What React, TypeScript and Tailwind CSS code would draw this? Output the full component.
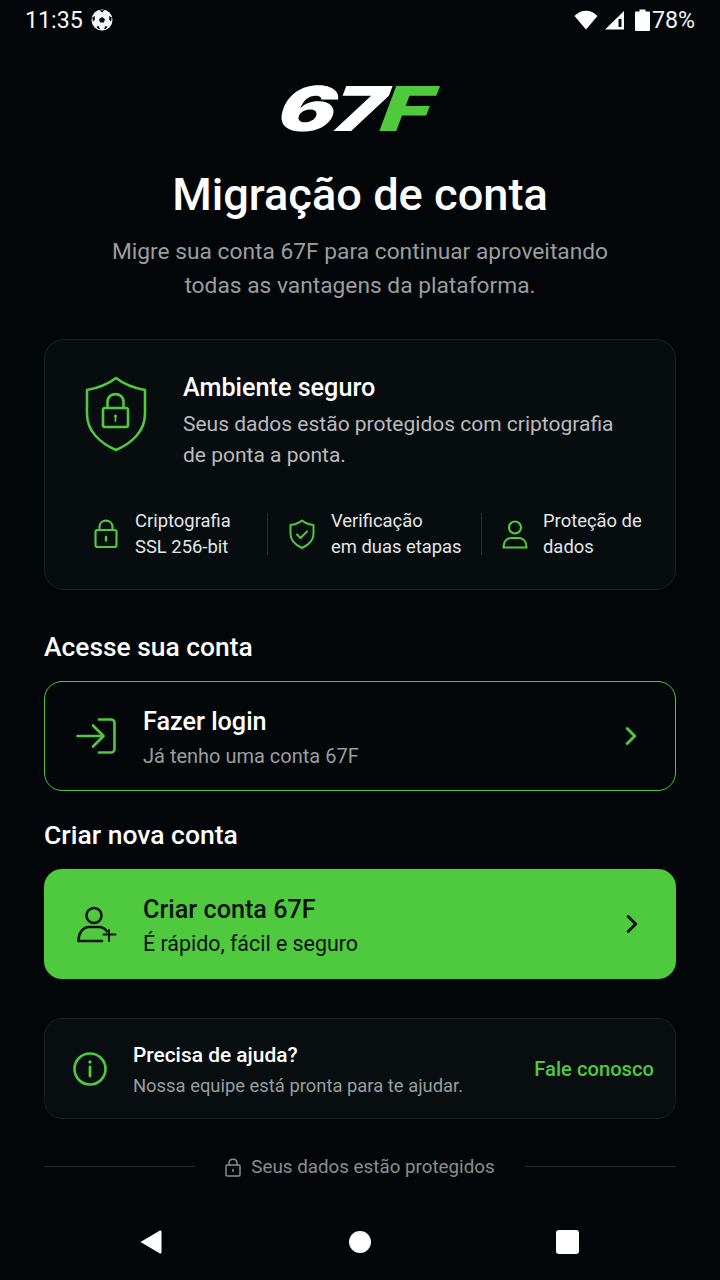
import { ChevronRight } from 'lucide-react';

const GREEN = '#4fc93d';

function BigShield() {
  return (
    <svg width="62" height="76" viewBox="0 0 62 76" fill="none" stroke={GREEN} strokeWidth="2.6" strokeLinejoin="round" strokeLinecap="round">
      <path d="M31 2 C40 9 49 12 60 14 V38 C60 55 47 67 31 74 C15 67 2 55 2 38 V14 C13 12 22 9 31 2 Z" />
      <rect x="18" y="32" width="25" height="19" rx="2" />
      <path d="M22.5 32 V26 C22.5 15.5 38.5 15.5 38.5 26 V32" />
      <circle cx="30.5" cy="40" r="1.5" fill={GREEN} stroke="none" />
      <path d="M30.5 40 V45" strokeWidth="1.8" />
    </svg>
  );
}

function SmallLock() {
  return (
    <svg width="24" height="30" viewBox="0 0 24 30" fill="none" stroke={GREEN} strokeWidth="2.2" strokeLinejoin="round" strokeLinecap="round">
      <rect x="1.5" y="11" width="21" height="17" rx="2" />
      <path d="M5.5 11 V8 C5.5 -0.5 18.5 -0.5 18.5 8 V11" />
      <path d="M12 18 V21.5" strokeWidth="2.4" />
    </svg>
  );
}

function SmallShield() {
  return (
    <svg width="26" height="30" viewBox="0 0 26 30" fill="none" stroke={GREEN} strokeWidth="2" strokeLinejoin="round" strokeLinecap="round">
      <path d="M13 1.5 C16 4 20 5.5 24.5 6 V15 C24.5 21.5 19.5 26 13 29 C6.5 26 1.5 21.5 1.5 15 V6 C6 5.5 10 4 13 1.5 Z" />
      <path d="M8 15.5 L11.5 19 L18 12.5" />
    </svg>
  );
}

function SmallPerson() {
  return (
    <svg width="26" height="29" viewBox="0 0 26 29" fill="none" stroke={GREEN} strokeWidth="2.2" strokeLinejoin="round" strokeLinecap="round">
      <circle cx="13" cy="7.5" r="6" />
      <path d="M1.5 27.5 C1.5 22 4.5 18 9.5 18 H16.5 C21.5 18 24.5 22 24.5 27.5 Z" />
    </svg>
  );
}

function LoginIcon() {
  return (
    <svg width="40" height="36" viewBox="0 0 40 36" fill="none" stroke={GREEN} strokeWidth="2.6" strokeLinejoin="round" strokeLinecap="round">
      <path d="M23 1.5 H35 C37 1.5 38.5 3 38.5 5 V31 C38.5 33 37 34.5 35 34.5 H23" />
      <path d="M1.5 18 H27" />
      <path d="M17 7.5 L27.5 18 L17 28.5" />
    </svg>
  );
}

function CreateIcon() {
  return (
    <svg width="40" height="37" viewBox="0 0 40 37" fill="none" stroke="#06130a" strokeWidth="2.6" strokeLinejoin="round" strokeLinecap="round">
      <circle cx="17" cy="9.5" r="7.5" />
      <path d="M30 25.5 C28 22.5 25 21 22 21 H12 C6 21 1.5 27 1.5 35 H25" />
      <path d="M32 24 V35 M26.5 28.5 H38.5" strokeWidth="2" />
    </svg>
  );
}

function InfoIcon() {
  return (
    <svg width="34" height="34" viewBox="0 0 34 34" fill="none" stroke={GREEN} strokeWidth="2.6" strokeLinecap="round">
      <circle cx="17" cy="17" r="15.5" />
      <path d="M17 15 V24" strokeWidth="2.8" />
      <circle cx="17" cy="10" r="1.7" fill={GREEN} stroke="none" />
    </svg>
  );
}

function FooterLock() {
  return (
    <svg width="16" height="19" viewBox="0 0 16 19" fill="none" stroke="#8b8f90" strokeWidth="1.5" strokeLinejoin="round" strokeLinecap="round">
      <rect x="1" y="7" width="14" height="11" rx="1" />
      <path d="M4 7 V5 C4 0 12 0 12 5 V7" />
      <path d="M8 11.5 V13.5" />
    </svg>
  );
}

function SoccerBall() {
  return (
    <svg width="22" height="22" viewBox="0 0 22 22">
      <circle cx="11" cy="11" r="10.5" fill="#f5f5f5" />
      <path d="M11 8 L14 10.2 L12.9 13.6 H9.1 L8 10.2 Z" fill="#05080a" />
      <path d="M8.5 1.2 L13.5 1.2 L11 3.4 Z M1.2 8.5 L3.8 7 L3.8 10.8 L2 12.5 Z M20.8 8.5 L18.2 7 L18.2 10.8 L20 12.5 Z M5.5 18 L7.5 16.8 L9 20.2 L7.5 20 Z M16.5 18 L14.5 16.8 L13 20.2 L14.5 20 Z" fill="#05080a" />
    </svg>
  );
}

function Feature({ icon, lines, className }: { icon: React.ReactNode; lines: string[]; className: string }) {
  return (
    <div className={`flex items-center ${className}`}>
      {icon}
      <p className="text-[18.4px] leading-[26px] text-[#e4e6e6]">
        {lines[0]}
        <br />
        {lines[1]}
      </p>
    </div>
  );
}

export default function App() {
  return (
    <div className="w-[720px] h-[1280px] overflow-hidden flex flex-col bg-[#020608] text-white font-['Roboto',sans-serif]">
      {/* status bar */}
      <div className="h-[40px] flex items-center justify-between pl-[25px] pr-[25px] text-[23.2px] text-[#f5f5f5]">
        <div className="flex items-center gap-[8px]">
          <span>11:35</span>
          <SoccerBall />
        </div>
        <div className="flex items-center">
          <svg width="24" height="20" viewBox="0 0 24 20" className="mr-[6px]">
            <path d="M0.5 6 C7 -1 17 -1 23.5 6 L12 19.5 Z" fill="#fff" />
          </svg>
          <svg width="21" height="20" viewBox="0 0 21 20" className="mr-[10px]">
            <path d="M20 1 V19.5 H1 Z" fill="#fff" />
            <path d="M14.5 9 H17.5 V17 H14.5 Z" fill="#020608" />
          </svg>
          <svg width="15" height="22" viewBox="0 0 15 22" className="mr-[2px]">
            <path d="M4.5 0.5 H10.5 V2.5 H14 C14.5 2.5 15 3 15 3.5 V21 C15 21.5 14.5 22 14 22 H1 C0.5 22 0 21.5 0 21 V3.5 C0 3 0.5 2.5 1 2.5 H4.5 Z" fill="#fff" />
          </svg>
          <span>78%</span>
        </div>
      </div>

      <main className="flex-1 flex flex-col px-[44px]">
        {/* logo */}
        <div className="mt-[39px] h-[60px] pr-[11px] flex items-center justify-center font-['Inter',sans-serif] font-black italic text-[62px] leading-none tracking-[-2px]">
          <span className="scale-x-[1.38] -skew-x-[6deg]">
            67<span className="text-[#4fc93d]">F</span>
          </span>
        </div>

        <h1 className="mt-[30px] text-center text-[45.2px] leading-[52px] font-medium">Migração de conta</h1>
        <p className="mt-[14px] text-center text-[22.76px] leading-[34px] text-[#9a9e9f]">
          Migre sua conta 67F para continuar aproveitando
          <br />
          todas as vantagens da plataforma.
        </p>

        {/* secure card */}
        <section className="mt-[36px] h-[251px] rounded-[20px] border border-[#15281a] bg-[#070c0e] pt-[32px]">
          <div className="flex pl-[40px]">
            <div className="w-[98px] pt-[4px]">
              <BigShield />
            </div>
            <div>
              <h2 className="text-[25.2px] leading-[32px] font-medium">Ambiente seguro</h2>
              <p className="mt-[5px] text-[21px] leading-[31px] text-[#b9bcbd]">
                Seus dados estão protegidos com criptografia
                <br />
                de ponta a ponta.
              </p>
            </div>
          </div>
          <div className="mt-[37px] flex items-center pl-[49px]">
            <Feature className="w-[173px] gap-[17px]" icon={<SmallLock />} lines={['Criptografia', 'SSL 256-bit']} />
            <div className="w-px h-[42px] bg-[#2b3032]" />
            <Feature className="w-[213px] pl-[21px] gap-[16px]" icon={<SmallShield />} lines={['Verificação', 'em duas etapas']} />
            <div className="w-px h-[42px] bg-[#2b3032]" />
            <Feature className="pl-[20px] gap-[15px]" icon={<SmallPerson />} lines={['Proteção de', 'dados']} />
          </div>
        </section>

        <h2 className="mt-[40px] text-[26.4px] leading-[34px] font-medium">Acesse sua conta</h2>
        <button className="mt-[17px] h-[110px] flex items-center rounded-[18px] border border-[#4fc93d] bg-[#03070a] pl-[31px] pr-[29px] text-left">
          <LoginIcon />
          <div className="ml-[27px] flex-1 pt-[2px]">
            <div className="text-[25.2px] leading-[34px] font-medium">Fazer login</div>
            <div className="mt-[3px] text-[20px] leading-[28px] text-[#9a9e9f]">Já tenho uma conta 67F</div>
          </div>
          <ChevronRight size={30} color={GREEN} strokeWidth={2.4} />
        </button>

        <h2 className="mt-[27px] text-[26.5px] leading-[34px] font-medium">Criar nova conta</h2>
        <button className="mt-[17px] h-[110px] flex items-center rounded-[18px] bg-[#4fc93d] pl-[33px] pr-[29px] text-left text-[#06130a]">
          <CreateIcon />
          <div className="ml-[26px] flex-1 pt-[3px]">
            <div className="text-[25.2px] leading-[34px] font-medium">Criar conta 67F</div>
            <div className="mt-[3px] text-[21.4px] leading-[28px]">É rápido, fácil e seguro</div>
          </div>
          <ChevronRight size={30} color="#06130a" strokeWidth={2.4} />
        </button>

        {/* help */}
        <section className="mt-[39px] h-[101px] flex items-center rounded-[18px] border border-[#1a1f21] bg-[#080d0f] pl-[28px] pr-[21px]">
          <InfoIcon />
          <div className="ml-[26px] flex-1 pt-[1px]">
            <div className="text-[20.9px] leading-[30px] font-medium">Precisa de ajuda?</div>
            <div className="mt-[3px] text-[18.4px] leading-[26px] text-[#9a9e9f]">Nossa equipe está pronta para te ajudar.</div>
          </div>
          <span className="pt-[2px] text-[20.2px] font-medium text-[#4fc93d]">Fale conosco</span>
        </section>

        <div className="mt-[32px] flex items-center">
          <div className="w-[151px] h-px bg-[#24292b]" />
          <div className="flex-1 pt-[2px] flex items-center justify-center gap-[10px] text-[18.8px] leading-[28px] text-[#8b8f90]">
            <FooterLock />
            <span>Seus dados estão protegidos</span>
          </div>
          <div className="w-[151px] h-px bg-[#24292b]" />
        </div>
      </main>

      {/* nav bar */}
      <div className="h-[50px] mb-[13px] flex items-center justify-between pl-[139px] pr-[141px]">
        <svg width="23" height="26" viewBox="0 0 23 26">
          <path d="M1.5 13 L21 1.5 Q22.5 1 22.5 3 V23 Q22.5 25 21 24.5 Z" fill="#fff" />
        </svg>
        <div className="ml-[2px] w-[22px] h-[22px] rounded-full bg-white" />
        <div className="w-[23px] h-[24px] rounded-[3px] bg-white" />
      </div>
    </div>
  );
}
